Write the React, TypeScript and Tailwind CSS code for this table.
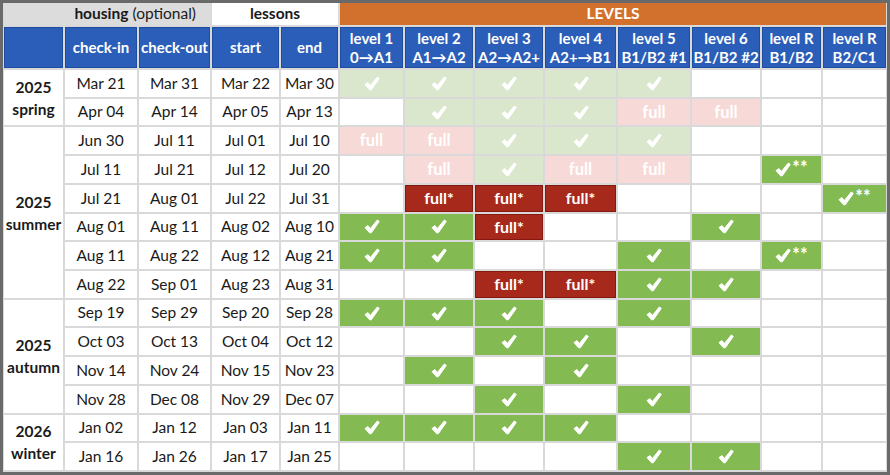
import React from "react";

type Mark = "" | "ok" | "okLight" | "fullLight" | "fullDark" | "okStar";

// one row per session: housing in/out, lessons start/end, then level cells
const ROWS: { d: string[]; m: Mark[] }[] = [
  { d: ["Mar 21", "Mar 31", "Mar 22", "Mar 30"], m: ["okLight", "okLight", "okLight", "okLight", "okLight", "", "", ""] },
  { d: ["Apr 04", "Apr 14", "Apr 05", "Apr 13"], m: ["", "okLight", "okLight", "okLight", "fullLight", "fullLight", "", ""] },
  { d: ["Jun 30", "Jul 11", "Jul 01", "Jul 10"], m: ["fullLight", "fullLight", "okLight", "okLight", "okLight", "", "", ""] },
  { d: ["Jul 11", "Jul 21", "Jul 12", "Jul 20"], m: ["", "fullLight", "okLight", "fullLight", "fullLight", "", "okStar", ""] },
  { d: ["Jul 21", "Aug 01", "Jul 22", "Jul 31"], m: ["", "fullDark", "fullDark", "fullDark", "", "", "", "okStar"] },
  { d: ["Aug 01", "Aug 11", "Aug 02", "Aug 10"], m: ["ok", "ok", "fullDark", "", "", "ok", "", ""] },
  { d: ["Aug 11", "Aug 22", "Aug 12", "Aug 21"], m: ["ok", "ok", "", "", "ok", "", "okStar", ""] },
  { d: ["Aug 22", "Sep 01", "Aug 23", "Aug 31"], m: ["", "", "fullDark", "fullDark", "ok", "ok", "", ""] },
  { d: ["Sep 19", "Sep 29", "Sep 20", "Sep 28"], m: ["ok", "ok", "ok", "", "ok", "", "", ""] },
  { d: ["Oct 03", "Oct 13", "Oct 04", "Oct 12"], m: ["", "", "ok", "ok", "", "ok", "", ""] },
  { d: ["Nov 14", "Nov 24", "Nov 15", "Nov 23"], m: ["", "ok", "", "ok", "", "", "", ""] },
  { d: ["Nov 28", "Dec 08", "Nov 29", "Dec 07"], m: ["", "", "ok", "", "ok", "", "", ""] },
  { d: ["Jan 02", "Jan 12", "Jan 03", "Jan 11"], m: ["ok", "ok", "ok", "ok", "", "", "", ""] },
  { d: ["Jan 16", "Jan 26", "Jan 17", "Jan 25"], m: ["", "", "", "", "ok", "ok", "", ""] },
];

const SEASONS = [
  { year: "2025", name: "spring", start: 0, span: "row-span-2" },
  { year: "2025", name: "summer", start: 2, span: "row-span-6" },
  { year: "2025", name: "autumn", start: 8, span: "row-span-4" },
  { year: "2026", name: "winter", start: 12, span: "row-span-2" },
];

const LEVELS: [string, string][] = [
  ["level 1", "0→A1"],
  ["level 2", "A1→A2"],
  ["level 3", "A2→A2+"],
  ["level 4", "A2+→B1"],
  ["level 5", "B1/B2 #1"],
  ["level 6", "B1/B2 #2"],
  ["level R", "B1/B2"],
  ["level R", "B2/C1"],
];

// heavy check, like the ✔ glyph in the sheet
function Check() {
  return (
    <svg width="16" height="15" viewBox="0 0 16 15" fill="white" stroke="white" strokeWidth="1" strokeLinejoin="round">
      <path d="M1 8.6 L4 6.6 L6.3 9.6 L13.3 1 L15.3 2.4 L7.3 13.8 L5.6 13.8 Z" />
    </svg>
  );
}

function LevelCell({ m }: { m: Mark }) {
  const base = "flex items-center justify-center text-white font-bold";
  if (m === "ok" || m === "okLight") {
    return (
      <div className={`${base} ${m === "ok" ? "bg-[#83bb52]" : "bg-[#dae7cd]"}`}>
        <Check />
      </div>
    );
  }
  if (m === "okStar") {
    return (
      <div className={`${base} bg-[#83bb52]`}>
        <Check />
        <span className="mt-[-4px] ml-[1px] text-[18px] leading-none">**</span>
      </div>
    );
  }
  if (m === "fullLight") {
    return <div className={`${base} bg-[#f7d9d7] text-[16.5px]`}>full</div>;
  }
  if (m === "fullDark") {
    return (
      <div className={`${base} border border-[#85190f] bg-[#a7291c] text-[16px]`}>full*</div>
    );
  }
  return <div className="bg-white" />;
}

export default function App() {
  return (
    <div
      className="h-[475px] w-[890px] border-[3px] border-[#6a6a6a] bg-[#d9d9d9] px-[1px] pb-[2px] text-[#1a1a1a]"
      style={{ fontFamily: 'Lato, "Liberation Sans", sans-serif' }}
    >
      <div className="grid h-full grid-cols-[59px_72px_71px_67px_57px_63px_68px_68px_71px_72px_68px_59px_63px] grid-rows-[22px_41px_repeat(14,minmax(0,1fr))] gap-[2px]">
        {/* group headers */}
        <div className="col-span-3 flex items-center justify-end bg-[#dcdcdc] pr-[14px] text-[15.5px]">
          <span className="font-bold">housing</span>
          <span className="ml-[4px]">(optional)</span>
        </div>
        <div className="col-span-2 flex items-center justify-center bg-white text-[15.5px] font-bold">
          lessons
        </div>
        <div className="col-span-8 flex items-center justify-center bg-[#d1712d] text-[15.5px] font-bold text-white">
          LEVELS
        </div>

        {/* column headers */}
        <div className="border border-[#1e4c9e] bg-[#2b5eb8]" />
        {["check-in", "check-out", "start", "end"].map((h) => (
          <div
            key={h}
            className="flex items-center justify-center whitespace-nowrap border border-[#1e4c9e] bg-[#2b5eb8] text-[15px] font-bold text-white"
          >
            {h}
          </div>
        ))}
        {LEVELS.map(([a, b], i) => (
          <div
            key={i}
            className="flex flex-col items-center justify-center whitespace-nowrap border border-[#1e4c9e] bg-[#2b5eb8] text-[15px] leading-[19px] font-bold text-white"
          >
            <span>{a}</span>
            <span>{b}</span>
          </div>
        ))}

        {/* body */}
        {ROWS.map((r, i) => {
          const season = SEASONS.find((s) => s.start === i);
          return (
            <React.Fragment key={i}>
              {season && (
                <div
                  className={`${season.span} flex flex-col items-center justify-center bg-white text-[15.5px] leading-[22px] font-bold`}
                >
                  <span>{season.year}</span>
                  <span>{season.name}</span>
                </div>
              )}
              {r.d.map((d, j) => (
                <div key={j} className="flex items-center justify-center bg-white text-[15.5px]">
                  {d}
                </div>
              ))}
              {r.m.map((m, j) => (
                <LevelCell key={j} m={m} />
              ))}
            </React.Fragment>
          );
        })}
      </div>
    </div>
  );
}
